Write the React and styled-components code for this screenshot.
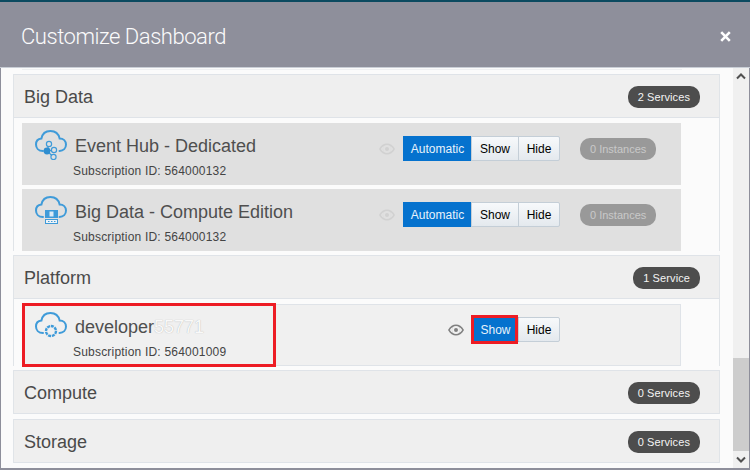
import React from 'react';
import styled, { createGlobalStyle } from 'styled-components';

const Global = createGlobalStyle`
  html, body { margin: 0; padding: 0; background: #fff; }
  body { font-family: "Liberation Sans", Arial, sans-serif; }
`;
const Dialog = styled.div`
  position: relative; width: 750px; height: 470px; overflow: hidden;
  box-sizing: border-box; display: flex; flex-direction: column;
  border-top: 2px solid #0b4a60; background: #fbfbfb;
`;
const Header = styled.header`
  height: 66px; flex: none; box-sizing: border-box; background: #8e8f9b;
  border-bottom: 1px solid #c9ced6;
  display: flex; align-items: center; justify-content: space-between;
  padding: 4px 19px 0 21px; color: #fff;
`;
const Title = styled.h1`
  margin: 0; font: 300 22px/1 Roboto, "Liberation Sans", sans-serif; letter-spacing: -0.46px; color: #fbfbfb;
`;
const Close = styled.span`display: flex; margin-top: -1px;`;
const Body = styled.div`
  flex: 1; min-height: 0; display: flex;
  border-left: 1px solid #8e8f9b; border-right: 1px solid #8e8f9b; border-bottom: 2px solid #8e8f9b;
`;
const Content = styled.div`
  flex: 1; min-width: 0; box-sizing: border-box; padding: 0 13px 0 12px; overflow: hidden;
`;
const Tail = styled.div`
  height: 1px; margin: 1px 38px 4px 9px; background: #eef0f2;
`;
const Section = styled.section`
  margin-bottom: ${p => p.$tight ? 4 : 5}px; border-left: 1px solid #e0e4e8; border-right: 1px solid #e0e4e8;
`;
const SectionHead = styled.div`
  height: 44px; box-sizing: border-box; display: flex; align-items: center; justify-content: space-between;
  background: #efefef; border-top: 1px solid #dfe3e8; border-bottom: 1px solid #dfe3e8;
  padding: 2px 19px 0 10px;
`;
const SectionName = styled.h2`
  margin: 0; font-size: 18px; font-weight: 400; color: #4a4a4a; line-height: 1;
`;
const Pill = styled.span`
  height: 22px; box-sizing: border-box; display: inline-flex; align-items: center; padding: 0 10px;
  border-radius: 10px; background: ${p => p.$muted ? '#999' : '#4d4d4d'};
  color: ${p => p.$muted ? '#c9c9c9' : '#f4f4f4'}; font-size: 11px; letter-spacing: ${p => p.$muted ? 0 : 0.1}px;
`;
const Rows = styled.div`
  padding: 5px 0 0 8px; display: flex; flex-direction: column; gap: 4px;
`;
const Row = styled.div`
  width: 659px; height: 62px; box-sizing: border-box; display: flex;
  background: ${p => p.$plain ? '#f0f0f0' : '#e0e0e0'};
  border: ${p => p.$plain ? '1px solid #dfe3e8' : 'none'};
`;
const Info = styled.div`
  width: ${p => p.$plain ? 356 : 357}px; flex: none; box-sizing: border-box;
  padding: ${p => p.$plain ? '3px 0 0 12px' : '4px 0 0 13px'};
`;
const NameLine = styled.div`display: flex; align-items: center; height: 36px; gap: 7px;`;
const Name = styled.span`font-size: 18px; color: #4f4f4f; white-space: nowrap; margin-top: 3px;`;
const Smudge = styled.span`color: #f9f9f9; text-shadow: 0 0 1px #aaa;`;
const Sub = styled.div`
  font-size: 12px; color: #444; margin: 1px 0 0 38px; line-height: 14px; white-space: nowrap; letter-spacing: 0.2px;
`;
const Controls = styled.div`
  display: flex; align-items: flex-start; height: 25px;
  padding: ${p => p.$plain ? '12px 0 0 69px' : '13px 0 0 0'};
`;
const EyeWrap = styled.span`
  width: 24px; height: 25px; display: flex; align-items: center; flex: none; opacity: ${p => p.$dim ? 0.1 : 1};
`;
const Group = styled.div`display: flex; width: ${p => p.$w}px; flex: none;`;
const Btn = styled.button`
  font: 12px "Liberation Sans", sans-serif; height: 25px; padding: 0; box-sizing: border-box; width: ${p => p.$w}px; flex: none;
  border: 1px solid ${p => p.$on ? '#0572ce' : '#c4ced7'}; margin-left: ${p => p.$on ? 0 : -1}px;
  border-radius: ${p => p.$end ? '0 2px 2px 0' : '0'};
  color: ${p => p.$on ? '#e8f2fb' : '#000'};
  background: ${p => p.$on ? '#0572ce' : 'linear-gradient(#f7f9fb, #e4e9ee)'};
`;
const PillSlot = styled.div`margin: 2px 0 0 20px;`;
const Scroll = styled.div`
  width: 16px; flex: none; background: #f0f0f0; display: flex; flex-direction: column; align-items: stretch;
`;
const Arrow = styled.div`height: 17px; display: flex; align-items: center; justify-content: center; flex: none;`;
const Track = styled.div`flex: 1; display: flex; flex-direction: column; justify-content: flex-end;`;
const Thumb = styled.div`height: 93px; background: #cdcdcd;`;
const RedBox = styled.div`
  position: absolute; box-sizing: border-box; border: ${p => p.$b}px solid #ed1c24; pointer-events: none;
  left: ${p => p.$x}px; top: ${p => p.$y}px; width: ${p => p.$w}px; height: ${p => p.$h}px;
`;

const blue = '#3f9bd9';
const CloudPath = () => (
  <path d="M8 21 C3.5 21 1 18 1 14.5 C1 11.2 3.2 9 6.4 8.6 C7.4 3.4 11 1 15.4 1 C20.2 1 23.6 4 24.6 8.4 C28.4 8.4 31 11 31 14.6 C31 18.2 28.4 21 24.5 21"
    fill="none" stroke={blue} strokeWidth="2" strokeLinecap="round" />
);
const HubIcon = () => (
  <svg width="33" height="30" viewBox="0 0 33 30">
    <CloudPath />
    <g fill="none" stroke={blue} strokeWidth="1.2">
      <path d="M12 21 L14 14 M12 21 L19 20 M12 21 L18.5 27" />
      <circle cx="14" cy="14" r="2.6" fill="#e0e0e0" /><circle cx="19" cy="20" r="2.6" fill="#e0e0e0" /><circle cx="18.5" cy="27" r="2.6" fill="#e0e0e0" />
    </g>
    <circle cx="12" cy="21" r="3.4" fill="#2f8ed0" />
  </svg>
);
const DataIcon = () => (
  <svg width="33" height="30" viewBox="0 0 33 30">
    <CloudPath />
    <rect x="10" y="14" width="13" height="8" fill={blue} />
    <rect x="14.5" y="15.5" width="4" height="5" fill="#dcebf6" />
    <rect x="10.5" y="23.5" width="12" height="4" fill="#eef3f7" stroke={blue} />
    <path d="M13 25.5h1.5M16 25.5h1.5M19 25.5h1.5" stroke={blue} />
  </svg>
);
const GearIcon = () => (
  <svg width="33" height="30" viewBox="0 0 33 30">
    <g transform="translate(0 1)">
      <CloudPath />
      <circle cx="16" cy="19" r="5" fill="#f0f0f0" stroke={blue} strokeWidth="2.4" strokeDasharray="3 .8" />
    </g>
  </svg>
);
const Eye = ({ dim }) => (
  <EyeWrap $dim={dim}>
    <svg width="16" height="12" viewBox="0 0 16 12" style={{ marginTop: 1 }}>
      <path fillRule="evenodd" fill={dim ? '#555' : '#808080'}
        d="M0 6 C2 2.2 5 0.5 8 0.5 C11 0.5 14 2.2 16 6 C14 9.8 11 11.5 8 11.5 C5 11.5 2 9.8 0 6 Z M8 2 A4 4 0 1 0 8 10 A4 4 0 1 0 8 2 Z M8 4 A2 2 0 1 1 8 8 A2 2 0 1 1 8 4 Z M1.8 6 C2.6 7.4 3.5 8.4 4.7 9 C3.6 7.3 3.6 4.7 4.7 3 C3.5 3.6 2.6 4.6 1.8 6 Z M14.2 6 C13.4 4.6 12.5 3.6 11.3 3 C12.4 4.7 12.4 7.3 11.3 9 C12.5 8.4 13.4 7.4 14.2 6 Z" />
    </svg>
  </EyeWrap>
);

const ServiceRow = ({ icon, name, id }) => (
  <Row>
    <Info>
      <NameLine>{icon}<Name>{name}</Name></NameLine>
      <Sub>Subscription ID: {id}</Sub>
    </Info>
    <Controls>
      <Eye dim />
      <Group $w={157}>
        <Btn $on $w={69}>Automatic</Btn>
        <Btn $w={48}>Show</Btn>
        <Btn $w={42} $end>Hide</Btn>
      </Group>
      <PillSlot><Pill $muted>0 Instances</Pill></PillSlot>
    </Controls>
  </Row>
);

const Empty = ({ name, count }) => (
  <Section>
    <SectionHead><SectionName>{name}</SectionName><Pill>{count}</Pill></SectionHead>
  </Section>
);

export default function App() {
  return (
    <Dialog>
      <Global />
      <Header>
        <Title>Customize Dashboard</Title>
        <Close>
          <svg width="11" height="11" viewBox="0 0 11 11"><path d="M1.2 1.2 L9.8 9.8 M9.8 1.2 L1.2 9.8" stroke="#fff" strokeWidth="2.6" /></svg>
        </Close>
      </Header>
      <Body>
        <Content>
          <Tail />
          <Section $tight>
            <SectionHead><SectionName>Big Data</SectionName><Pill>2 Services</Pill></SectionHead>
            <Rows>
              <ServiceRow icon={<HubIcon />} name="Event Hub - Dedicated" id="564000132" />
              <ServiceRow icon={<DataIcon />} name="Big Data - Compute Edition" id="564000132" />
            </Rows>
          </Section>
          <Section $tight>
            <SectionHead><SectionName>Platform</SectionName><Pill>1 Service</Pill></SectionHead>
            <Rows>
              <Row $plain>
                <Info $plain>
                  <NameLine><GearIcon /><Name>developer<Smudge>55771</Smudge></Name></NameLine>
                  <Sub>Subscription ID: 564001009</Sub>
                </Info>
                <Controls $plain>
                  <Eye />
                  <Group $w={89}>
                    <Btn $on $w={47}>Show</Btn>
                    <Btn $w={42} $end>Hide</Btn>
                  </Group>
                </Controls>
              </Row>
            </Rows>
          </Section>
          <Empty name="Compute" count="0 Services" />
          <Empty name="Storage" count="0 Services" />
        </Content>
        <Scroll>
          <Arrow>
            <svg width="10" height="7" viewBox="0 0 10 7"><path d="M1 5.5 L5 1.5 L9 5.5" fill="none" stroke="#505050" strokeWidth="2" /></svg>
          </Arrow>
          <Track><Thumb /></Track>
          <Arrow>
            <svg width="10" height="7" viewBox="0 0 10 7"><path d="M1 1.5 L5 5.5 L9 1.5" fill="none" stroke="#505050" strokeWidth="2" /></svg>
          </Arrow>
        </Scroll>
      </Body>
      <RedBox $b={3} $x={22} $y={301} $w={254} $h={64} />
      <RedBox $b={3} $x={471} $y={313} $w={47} $h={29} />
    </Dialog>
  );
}
